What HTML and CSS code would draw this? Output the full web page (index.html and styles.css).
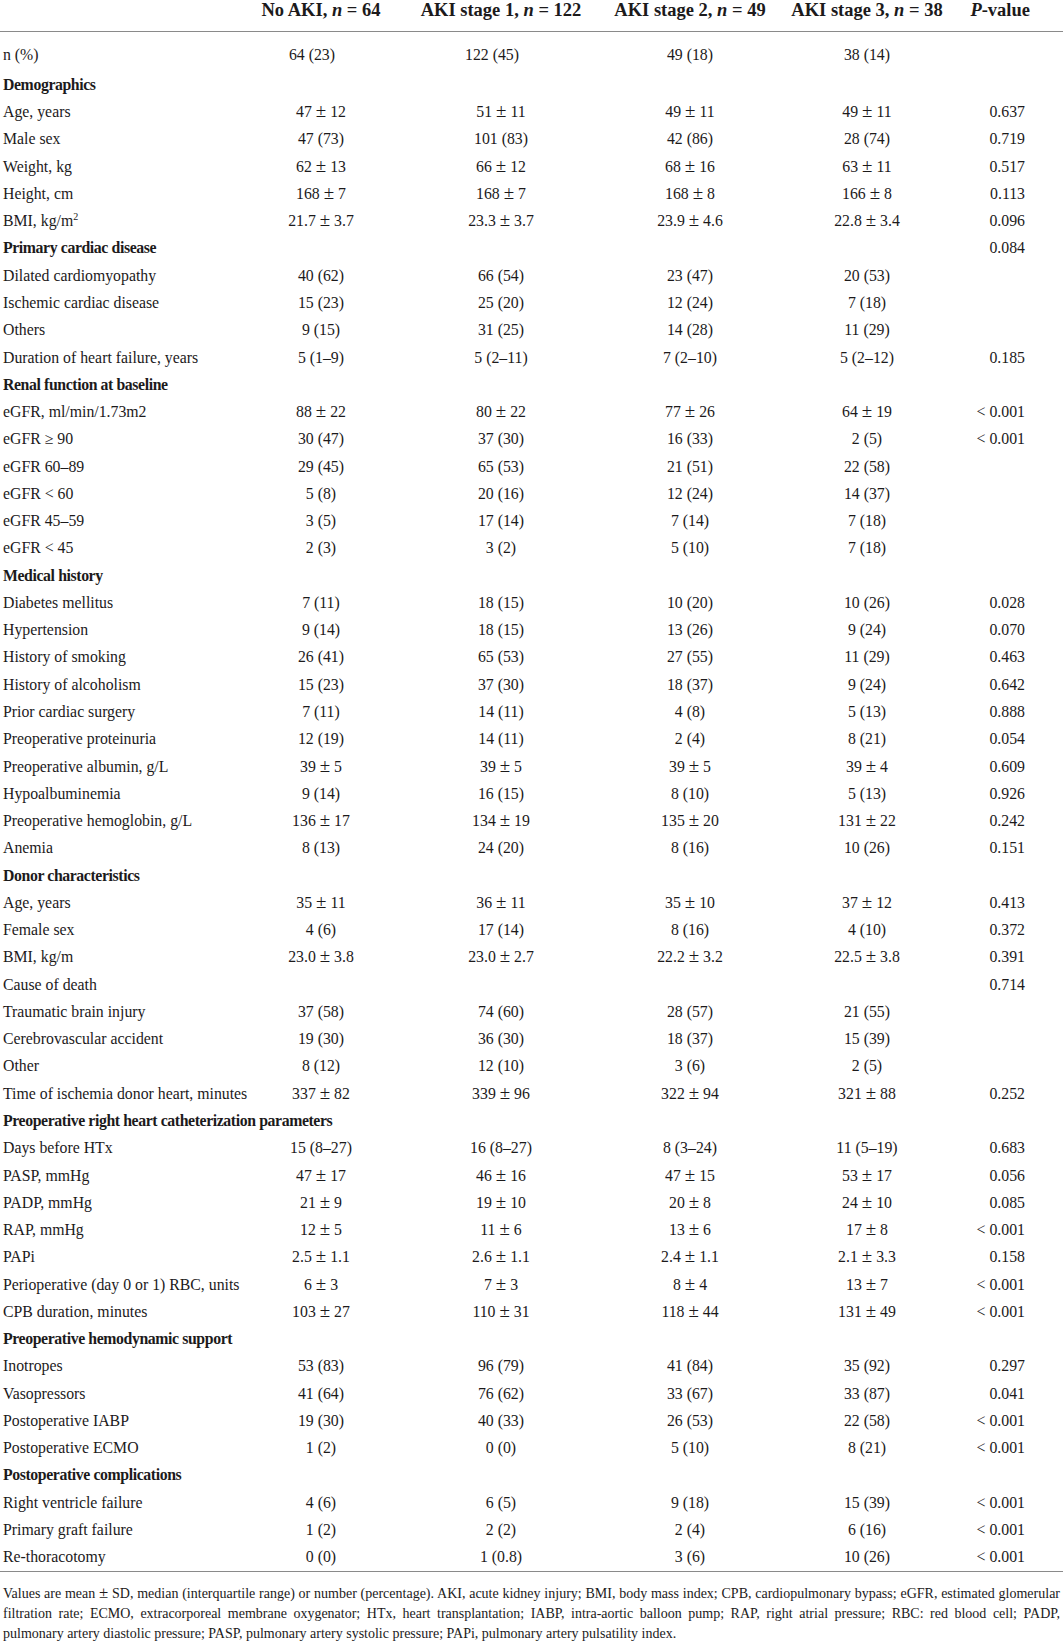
FILE: index.html
```html
<!DOCTYPE html>
<html>
<head>
<meta charset="utf-8">
<link rel="stylesheet" href="styles.css">
</head>
<body>
<div class="wrap">
<table class="tbl">
<colgroup>
<col class="c-label"><col class="c1"><col class="c2"><col class="c3"><col class="c4"><col class="c5"><col class="c6">
</colgroup>
<thead>
<tr>
<th></th>
<th>No AKI, <i>n</i> = 64</th>
<th>AKI stage 1, <i>n</i> = 122</th>
<th>AKI stage 2, <i>n</i> = 49</th>
<th>AKI stage 3, <i>n</i> = 38</th>
<th class="ph"><i>P</i>-value</th>
<th></th>
</tr>
</thead>
<tbody>
<tr class="first"><td>n (%)</td><td class="shift">64 (23)</td><td class="shift">122 (45)</td><td>49 (18)</td><td>38 (14)</td><td></td><td></td></tr>
<tr class="sec"><td>Demographics</td><td></td><td></td><td></td><td></td><td></td><td></td></tr>
<tr><td>Age, years</td><td>47 <span class="pm">±</span> 12</td><td>51 <span class="pm">±</span> 11</td><td>49 <span class="pm">±</span> 11</td><td>49 <span class="pm">±</span> 11</td><td>0.637</td><td></td></tr>
<tr><td>Male sex</td><td>47 (73)</td><td>101 (83)</td><td>42 (86)</td><td>28 (74)</td><td>0.719</td><td></td></tr>
<tr><td>Weight, kg</td><td>62 <span class="pm">±</span> 13</td><td>66 <span class="pm">±</span> 12</td><td>68 <span class="pm">±</span> 16</td><td>63 <span class="pm">±</span> 11</td><td>0.517</td><td></td></tr>
<tr><td>Height, cm</td><td>168 <span class="pm">±</span> 7</td><td>168 <span class="pm">±</span> 7</td><td>168 <span class="pm">±</span> 8</td><td>166 <span class="pm">±</span> 8</td><td>0.113</td><td></td></tr>
<tr><td>BMI, kg/m<sup>2</sup></td><td>21.7 <span class="pm">±</span> 3.7</td><td>23.3 <span class="pm">±</span> 3.7</td><td>23.9 <span class="pm">±</span> 4.6</td><td>22.8 <span class="pm">±</span> 3.4</td><td>0.096</td><td></td></tr>
<tr class="sec"><td>Primary cardiac disease</td><td></td><td></td><td></td><td></td><td>0.084</td><td></td></tr>
<tr><td>Dilated cardiomyopathy</td><td>40 (62)</td><td>66 (54)</td><td>23 (47)</td><td>20 (53)</td><td></td><td></td></tr>
<tr><td>Ischemic cardiac disease</td><td>15 (23)</td><td>25 (20)</td><td>12 (24)</td><td>7 (18)</td><td></td><td></td></tr>
<tr><td>Others</td><td>9 (15)</td><td>31 (25)</td><td>14 (28)</td><td>11 (29)</td><td></td><td></td></tr>
<tr><td>Duration of heart failure, years</td><td>5 (1–9)</td><td>5 (2–11)</td><td>7 (2–10)</td><td>5 (2–12)</td><td>0.185</td><td></td></tr>
<tr class="sec"><td>Renal function at baseline</td><td></td><td></td><td></td><td></td><td></td><td></td></tr>
<tr><td>eGFR, ml/min/1.73m2</td><td>88 <span class="pm">±</span> 22</td><td>80 <span class="pm">±</span> 22</td><td>77 <span class="pm">±</span> 26</td><td>64 <span class="pm">±</span> 19</td><td>&lt; 0.001</td><td></td></tr>
<tr><td>eGFR ≥ 90</td><td>30 (47)</td><td>37 (30)</td><td>16 (33)</td><td>2 (5)</td><td>&lt; 0.001</td><td></td></tr>
<tr><td>eGFR 60–89</td><td>29 (45)</td><td>65 (53)</td><td>21 (51)</td><td>22 (58)</td><td></td><td></td></tr>
<tr><td>eGFR &lt; 60</td><td>5 (8)</td><td>20 (16)</td><td>12 (24)</td><td>14 (37)</td><td></td><td></td></tr>
<tr><td>eGFR 45–59</td><td>3 (5)</td><td>17 (14)</td><td>7 (14)</td><td>7 (18)</td><td></td><td></td></tr>
<tr><td>eGFR &lt; 45</td><td>2 (3)</td><td>3 (2)</td><td>5 (10)</td><td>7 (18)</td><td></td><td></td></tr>
<tr class="sec"><td>Medical history</td><td></td><td></td><td></td><td></td><td></td><td></td></tr>
<tr><td>Diabetes mellitus</td><td>7 (11)</td><td>18 (15)</td><td>10 (20)</td><td>10 (26)</td><td>0.028</td><td></td></tr>
<tr><td>Hypertension</td><td>9 (14)</td><td>18 (15)</td><td>13 (26)</td><td>9 (24)</td><td>0.070</td><td></td></tr>
<tr><td>History of smoking</td><td>26 (41)</td><td>65 (53)</td><td>27 (55)</td><td>11 (29)</td><td>0.463</td><td></td></tr>
<tr><td>History of alcoholism</td><td>15 (23)</td><td>37 (30)</td><td>18 (37)</td><td>9 (24)</td><td>0.642</td><td></td></tr>
<tr><td>Prior cardiac surgery</td><td>7 (11)</td><td>14 (11)</td><td>4 (8)</td><td>5 (13)</td><td>0.888</td><td></td></tr>
<tr><td>Preoperative proteinuria</td><td>12 (19)</td><td>14 (11)</td><td>2 (4)</td><td>8 (21)</td><td>0.054</td><td></td></tr>
<tr><td>Preoperative albumin, g/L</td><td>39 <span class="pm">±</span> 5</td><td>39 <span class="pm">±</span> 5</td><td>39 <span class="pm">±</span> 5</td><td>39 <span class="pm">±</span> 4</td><td>0.609</td><td></td></tr>
<tr><td>Hypoalbuminemia</td><td>9 (14)</td><td>16 (15)</td><td>8 (10)</td><td>5 (13)</td><td>0.926</td><td></td></tr>
<tr><td>Preoperative hemoglobin, g/L</td><td>136 <span class="pm">±</span> 17</td><td>134 <span class="pm">±</span> 19</td><td>135 <span class="pm">±</span> 20</td><td>131 <span class="pm">±</span> 22</td><td>0.242</td><td></td></tr>
<tr><td>Anemia</td><td>8 (13)</td><td>24 (20)</td><td>8 (16)</td><td>10 (26)</td><td>0.151</td><td></td></tr>
<tr class="sec"><td>Donor characteristics</td><td></td><td></td><td></td><td></td><td></td><td></td></tr>
<tr><td>Age, years</td><td>35 <span class="pm">±</span> 11</td><td>36 <span class="pm">±</span> 11</td><td>35 <span class="pm">±</span> 10</td><td>37 <span class="pm">±</span> 12</td><td>0.413</td><td></td></tr>
<tr><td>Female sex</td><td>4 (6)</td><td>17 (14)</td><td>8 (16)</td><td>4 (10)</td><td>0.372</td><td></td></tr>
<tr><td>BMI, kg/m</td><td>23.0 <span class="pm">±</span> 3.8</td><td>23.0 <span class="pm">±</span> 2.7</td><td>22.2 <span class="pm">±</span> 3.2</td><td>22.5 <span class="pm">±</span> 3.8</td><td>0.391</td><td></td></tr>
<tr><td>Cause of death</td><td></td><td></td><td></td><td></td><td>0.714</td><td></td></tr>
<tr><td>Traumatic brain injury</td><td>37 (58)</td><td>74 (60)</td><td>28 (57)</td><td>21 (55)</td><td></td><td></td></tr>
<tr><td>Cerebrovascular accident</td><td>19 (30)</td><td>36 (30)</td><td>18 (37)</td><td>15 (39)</td><td></td><td></td></tr>
<tr><td>Other</td><td>8 (12)</td><td>12 (10)</td><td>3 (6)</td><td>2 (5)</td><td></td><td></td></tr>
<tr><td>Time of ischemia donor heart, minutes</td><td>337 <span class="pm">±</span> 82</td><td>339 <span class="pm">±</span> 96</td><td>322 <span class="pm">±</span> 94</td><td>321 <span class="pm">±</span> 88</td><td>0.252</td><td></td></tr>
<tr class="sec"><td>Preoperative right heart catheterization parameters</td><td></td><td></td><td></td><td></td><td></td><td></td></tr>
<tr><td>Days before HTx</td><td>15 (8–27)</td><td>16 (8–27)</td><td>8 (3–24)</td><td>11 (5–19)</td><td>0.683</td><td></td></tr>
<tr><td>PASP, mmHg</td><td>47 <span class="pm">±</span> 17</td><td>46 <span class="pm">±</span> 16</td><td>47 <span class="pm">±</span> 15</td><td>53 <span class="pm">±</span> 17</td><td>0.056</td><td></td></tr>
<tr><td>PADP, mmHg</td><td>21 <span class="pm">±</span> 9</td><td>19 <span class="pm">±</span> 10</td><td>20 <span class="pm">±</span> 8</td><td>24 <span class="pm">±</span> 10</td><td>0.085</td><td></td></tr>
<tr><td>RAP, mmHg</td><td>12 <span class="pm">±</span> 5</td><td>11 <span class="pm">±</span> 6</td><td>13 <span class="pm">±</span> 6</td><td>17 <span class="pm">±</span> 8</td><td>&lt; 0.001</td><td></td></tr>
<tr><td>PAPi</td><td>2.5 <span class="pm">±</span> 1.1</td><td>2.6 <span class="pm">±</span> 1.1</td><td>2.4 <span class="pm">±</span> 1.1</td><td>2.1 <span class="pm">±</span> 3.3</td><td>0.158</td><td></td></tr>
<tr><td>Perioperative (day 0 or 1) RBC, units</td><td>6 <span class="pm">±</span> 3</td><td>7 <span class="pm">±</span> 3</td><td>8 <span class="pm">±</span> 4</td><td>13 <span class="pm">±</span> 7</td><td>&lt; 0.001</td><td></td></tr>
<tr><td>CPB duration, minutes</td><td>103 <span class="pm">±</span> 27</td><td>110 <span class="pm">±</span> 31</td><td>118 <span class="pm">±</span> 44</td><td>131 <span class="pm">±</span> 49</td><td>&lt; 0.001</td><td></td></tr>
<tr class="sec"><td>Preoperative hemodynamic support</td><td></td><td></td><td></td><td></td><td></td><td></td></tr>
<tr><td>Inotropes</td><td>53 (83)</td><td>96 (79)</td><td>41 (84)</td><td>35 (92)</td><td>0.297</td><td></td></tr>
<tr><td>Vasopressors</td><td>41 (64)</td><td>76 (62)</td><td>33 (67)</td><td>33 (87)</td><td>0.041</td><td></td></tr>
<tr><td>Postoperative IABP</td><td>19 (30)</td><td>40 (33)</td><td>26 (53)</td><td>22 (58)</td><td>&lt; 0.001</td><td></td></tr>
<tr><td>Postoperative ECMO</td><td>1 (2)</td><td>0 (0)</td><td>5 (10)</td><td>8 (21)</td><td>&lt; 0.001</td><td></td></tr>
<tr class="sec"><td>Postoperative complications</td><td></td><td></td><td></td><td></td><td></td><td></td></tr>
<tr><td>Right ventricle failure</td><td>4 (6)</td><td>6 (5)</td><td>9 (18)</td><td>15 (39)</td><td>&lt; 0.001</td><td></td></tr>
<tr><td>Primary graft failure</td><td>1 (2)</td><td>2 (2)</td><td>2 (4)</td><td>6 (16)</td><td>&lt; 0.001</td><td></td></tr>
<tr class="last"><td>Re-thoracotomy</td><td>0 (0)</td><td>1 (0.8)</td><td>3 (6)</td><td>10 (26)</td><td>&lt; 0.001</td><td></td></tr>
</tbody>
</table>
<div class="note">
<span class="ln">Values are mean <span class="pm">±</span> SD, median (interquartile range) or number (percentage). AKI, acute kidney injury; BMI, body mass index; CPB, cardiopulmonary bypass; eGFR, estimated glomerular</span>
<span class="ln">filtration rate; ECMO, extracorporeal membrane oxygenator; HTx, heart transplantation; IABP, intra-aortic balloon pump; RAP, right atrial pressure; RBC: red blood cell; PADP,</span>
<span class="ln ln-last">pulmonary artery diastolic pressure; PASP, pulmonary artery systolic pressure; PAPi, pulmonary artery pulsatility index.</span>
</div>
</div>
</body>
</html>
```
FILE: styles.css
```css
html, body {
  margin: 0;
  padding: 0;
  background: #fff;
}
.wrap {
  width: 1063px;
  font-family: "Liberation Serif", "Times New Roman", serif;
  color: #1c1a1b;
}
.tbl {
  width: 1063px;
  border-collapse: collapse;
  table-layout: fixed;
}
.c-label { width: 235px; }
.c1 { width: 172px; }
.c2 { width: 188px; }
.c3 { width: 190px; }
.c4 { width: 164px; }
.c5 { width: 81px; }
.c6 { width: 33px; }
.tbl th {
  font-size: 18.5px;
  font-weight: bold;
  line-height: 20px;
  padding: 0 0 11px 0;
  text-align: center;
  white-space: nowrap;
  border-bottom: 1px solid #8a8a8a;
}
.tbl th.ph {
  text-align: right;
}
.tbl td {
  font-size: 15.8px;
  height: 27.28px;
  line-height: 18px;
  padding: 0;
  text-align: center;
  white-space: nowrap;
  vertical-align: middle;
}
.tbl td:first-child {
  text-align: left;
  padding-left: 3px;
}
.tbl td:nth-child(6) {
  text-align: right;
  padding-right: 5px;
}
.tbl tr.first td {
  height: 33.28px;
  padding-top: 6px;
}
.tbl tr.last td {
  border-bottom: 1px solid #8a8a8a;
}
.tbl tr.sec td:first-child {
  font-weight: bold;
  letter-spacing: -0.4px;
}
.tbl td.shift {
  padding-right: 18px;
}
.tbl sup {
  font-size: 10px;
  line-height: 0;
  vertical-align: 6px;
}
.pm {
  font-size: 1.2em;
  line-height: 0;
}
.note {
  padding: 12px 3px 0 3px;
  font-size: 14px;
  line-height: 20px;
}
.ln {
  display: block;
  text-align: justify;
  text-align-last: justify;
  white-space: normal;
}
.ln-last {
  text-align-last: left;
}
```
